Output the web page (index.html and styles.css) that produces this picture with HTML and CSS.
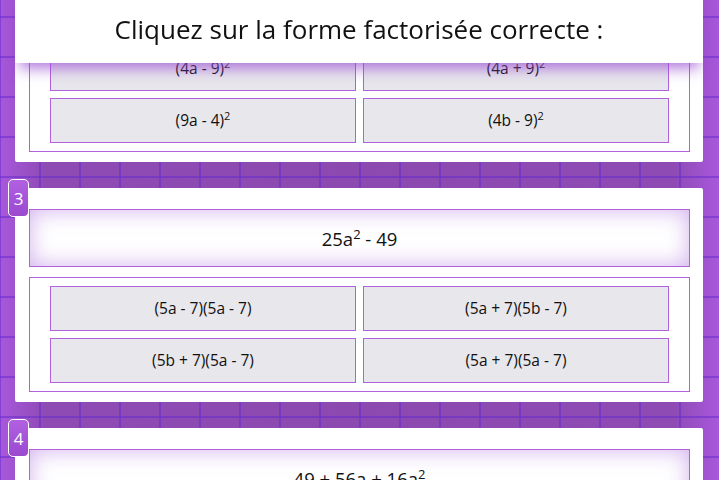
FILE: index.html
```html
<!DOCTYPE html>
<html lang="fr">
<head>
<meta charset="utf-8">
<title>Factorisation</title>
<link rel="stylesheet" href="styles.css">
</head>
<body>
<header class="topbar">
  <h1 class="title">Cliquez sur la forme factorisée correcte :</h1>
</header>
<main class="list">
  <section class="card">
    <div class="badge">2</div>
    <div class="prompt"><span>16a<sup>2</sup> - 81</span></div>
    <div class="options">
      <button class="opt">(4a - 9)<sup>2</sup></button>
      <button class="opt">(4a + 9)<sup>2</sup></button>
      <button class="opt">(9a - 4)<sup>2</sup></button>
      <button class="opt">(4b - 9)<sup>2</sup></button>
    </div>
  </section>
  <section class="card">
    <div class="badge">3</div>
    <div class="prompt"><span>25a<sup>2</sup> - 49</span></div>
    <div class="options">
      <button class="opt">(5a - 7)(5a - 7)</button>
      <button class="opt">(5a + 7)(5b - 7)</button>
      <button class="opt">(5b + 7)(5a - 7)</button>
      <button class="opt">(5a + 7)(5a - 7)</button>
    </div>
  </section>
  <section class="card">
    <div class="badge">4</div>
    <div class="prompt"><span>49 + 56a + 16a<sup>2</sup></span></div>
    <div class="options">
      <button class="opt">(7 + 4a)<sup>2</sup></button>
      <button class="opt">(7 - 4a)<sup>2</sup></button>
      <button class="opt">(4 + 7a)<sup>2</sup></button>
      <button class="opt">(7 + 4b)<sup>2</sup></button>
    </div>
  </section>
</main>
</body>
</html>
```
FILE: styles.css
```css
* { box-sizing: border-box; }
html, body { margin: 0; padding: 0; }
body {
  font-family: "Open Sans", "Noto Sans", sans-serif;
  color: #111;
  padding: 0 16px 16px 15px;
  min-height: 480px;
  overflow: hidden;
  background-color: #8e4bb4;
  background-image:
    linear-gradient(rgba(104, 44, 206, 0.55) 2px, transparent 2px),
    linear-gradient(90deg, rgba(104, 44, 206, 0.55) 2px, transparent 2px),
    linear-gradient(90deg, #a858dc 0, #8e4bb4 45px, #8c4ab0 50%, #8e4bb4 calc(100% - 45px), #a858dc 100%);
  background-size: 40px 40px, 40px 40px, 100% 100%;
  background-position: 0 16px, -1px 0, 0 0;
}
.topbar {
  position: fixed;
  top: 0;
  left: 15px;
  right: 16px;
  height: 63px;
  background: #fff;
  z-index: 10;
  display: flex;
  align-items: center;
  justify-content: center;
  box-shadow: 0 9px 14px -4px rgba(150, 70, 210, 0.75);
}
.title {
  margin: 0;
  font-weight: 400;
  font-size: 26px;
  color: #111;
  padding-bottom: 5px;
}
.list {
  margin-top: -52px;
  display: flex;
  flex-direction: column;
  gap: 26px;
}
.card {
  position: relative;
  background: #fff;
  border-radius: 2px;
  padding: 21px 13px 10px 14px;
}
.badge {
  position: absolute;
  left: -7px;
  top: -9px;
  width: 21px;
  height: 38px;
  border: 1px solid #fff;
  border-radius: 5px;
  background: linear-gradient(#b060e0, #9b4ad0);
  color: #fff;
  font-size: 17px;
  display: flex;
  align-items: center;
  justify-content: center;
}
.prompt {
  height: 58px;
  border: 1px solid #b062dc;
  background: #fff;
  box-shadow: inset 0 0 22px rgba(165, 95, 220, 0.5);
  display: flex;
  align-items: center;
  justify-content: center;
  font-size: 18.5px;
  margin-bottom: 10px;
}
.prompt sup { font-size: 13px; line-height: 0; vertical-align: 0.55em; }
.options {
  border: 1px solid #b062dc;
  padding: 8px 20px;
  display: grid;
  grid-template-columns: 1fr 1fr;
  gap: 7px;
}
.opt {
  display: block;
  height: 45px;
  border: 1px solid #b062dc;
  background: #e8e7ec;
  font-family: inherit;
  font-size: 15.5px;
  line-height: 43px;
  color: #111;
  padding: 0;
  text-align: center;
}
.opt sup { font-size: 11px; line-height: 0; vertical-align: 0.55em; }
```
